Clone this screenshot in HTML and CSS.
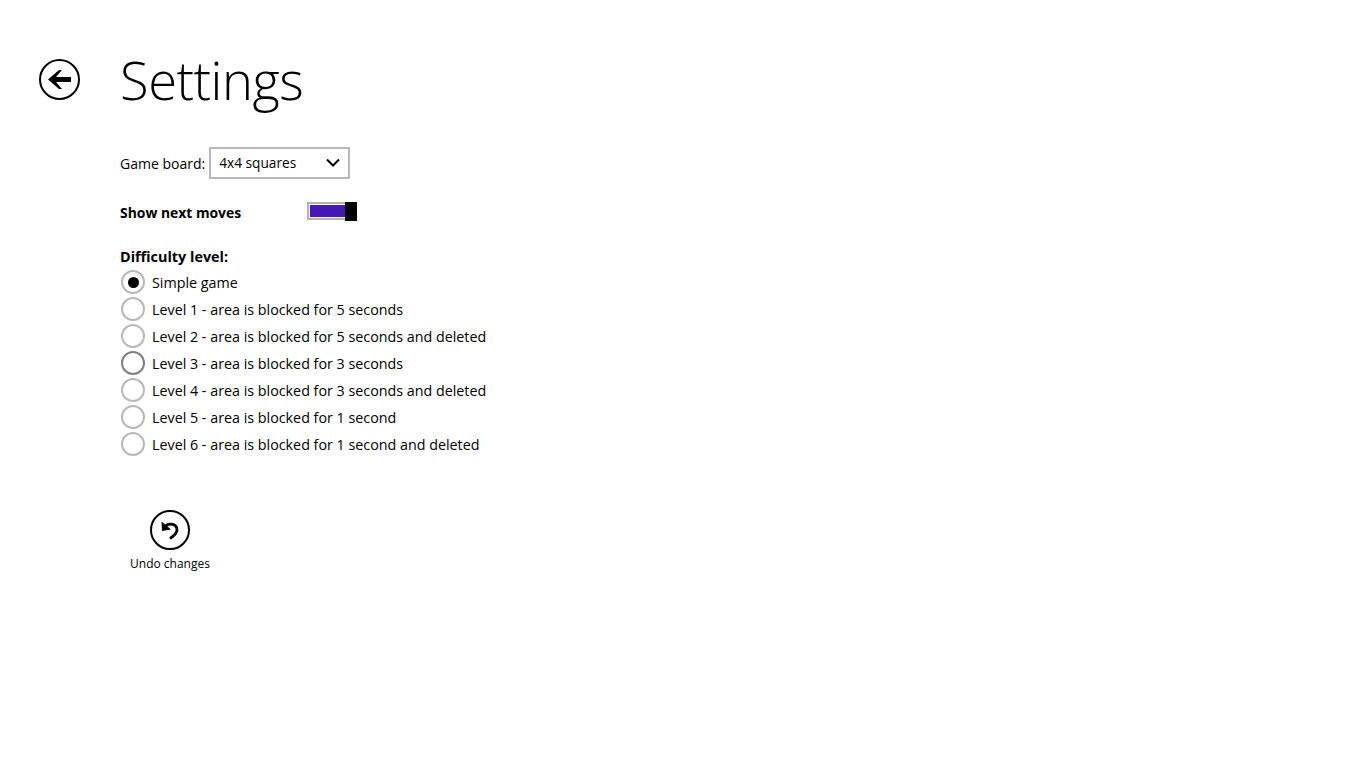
FILE: index.html
```html
<!DOCTYPE html>
<html lang="en">
<head>
    <meta charset="UTF-8">
    <title>Settings</title>
    <link rel="stylesheet" href="styles.css">
</head>
<body>
    <div class="page-header">
        <button type="button" class="back-btn" aria-label="Back">
            <svg width="42" height="42" viewBox="0 0 42 42">
                <circle cx="20.5" cy="20.5" r="19.5" fill="none" stroke="#000" stroke-width="2"/>
                <path d="M9 20.5 L20 11 L23 11 L17 18 L32 18 L32 23 L17 23 L23 30 L20 30 Z" fill="#000"/>
            </svg>
        </button>
        <h1>Settings</h1>
    </div>

    <div class="content">
        <div class="board-row">
            <label>Game board:</label>
            <div class="select-box">
                <span>4x4 squares</span>
                <svg width="14" height="9" viewBox="0 0 14 9">
                    <path d="M1 1.5 L7 7.5 L13 1.5" fill="none" stroke="#000" stroke-width="2"/>
                </svg>
            </div>
        </div>

        <div class="toggle-row">
            <label class="bold-label">Show next moves</label>
            <div class="toggle">
                <div class="toggle-fill"></div>
                <div class="toggle-thumb"></div>
            </div>
        </div>

        <div class="bold-label level-title">Difficulty level:</div>
        <div class="radio-list">
            <div class="radio-row"><span class="radio checked"></span>Simple game</div>
            <div class="radio-row"><span class="radio"></span>Level 1 - area is blocked for 5 seconds</div>
            <div class="radio-row"><span class="radio"></span>Level 2 - area is blocked for 5 seconds and deleted</div>
            <div class="radio-row"><span class="radio hover"></span>Level 3 - area is blocked for 3 seconds</div>
            <div class="radio-row"><span class="radio"></span>Level 4 - area is blocked for 3 seconds and deleted</div>
            <div class="radio-row"><span class="radio"></span>Level 5 - area is blocked for 1 second</div>
            <div class="radio-row"><span class="radio"></span>Level 6 - area is blocked for 1 second and deleted</div>
        </div>

        <div class="undo-btn">
            <svg width="40" height="40" viewBox="0 0 40 40">
                <circle cx="20" cy="20" r="19" fill="none" stroke="#000" stroke-width="2"/>
                <path d="M15.5 16 C19.5 12.5 27 14 27 20 C27 23.5 24.5 25.5 20 28.5" fill="none" stroke="#000" stroke-width="2.8"/>
                <path d="M11.5 11.5 L12 21 L21 19.5 Z" fill="#000"/>
            </svg>
            <span>Undo changes</span>
        </div>
    </div>
</body>
</html>
```

FILE: styles.css
```css
* {
    box-sizing: border-box;
}

body {
    margin: 0;
    background: white;
    color: #000;
    font-family: "Open Sans", "Noto Sans", sans-serif;
    font-size: 14px;
}

.page-header {
    display: flex;
    align-items: center;
    height: 147px;
    padding: 13px 0 0 39px;
}

.back-btn {
    width: 42px;
    height: 42px;
    padding: 0;
    border: none;
    background: none;
    margin-right: 39px;
}

.back-btn svg,
.undo-btn svg {
    display: block;
}

h1 {
    margin: 0;
    font-size: 52.5px;
    font-weight: 300;
    line-height: 66px;
    letter-spacing: -0.5px;
}

.content {
    padding-left: 120px;
}

.board-row {
    display: flex;
    align-items: center;
    gap: 4px;
    height: 32px;
}

.select-box {
    display: flex;
    align-items: center;
    justify-content: space-between;
    width: 141px;
    height: 32px;
    padding: 0 8px 2px 8px;
    border: 2px solid #b9b9b9;
    font-size: 13.7px;
}

.toggle-row {
    display: flex;
    align-items: center;
    height: 22px;
    margin-top: 21px;
}

.bold-label {
    font-weight: 700;
    font-size: 13.9px;
}

.toggle-row label {
    width: 187px;
    padding-top: 2px;
}

.toggle {
    width: 50px;
    height: 18px;
    border: 2px solid #b3b3b3;
    border-right: none;
    position: relative;
}

.toggle-fill {
    width: 35px;
    height: 12px;
    margin: 1px 0 0 1px;
    background: #4617b4;
}

.toggle-thumb {
    position: absolute;
    top: -2px;
    right: 0;
    width: 12px;
    height: 19px;
    background: #000;
}

.level-title {
    margin-top: 25px;
    line-height: 20px;
    font-size: 14.4px;
}

.radio-list {
    display: flex;
    flex-direction: column;
    margin-top: 2px;
    font-size: 14.3px;
}

.radio-row {
    display: flex;
    align-items: center;
    height: 27px;
}

.radio {
    display: flex;
    align-items: center;
    justify-content: center;
    width: 24px;
    height: 24px;
    margin: 0 7px 1px 1px;
    border: 2px solid #b9b9b9;
    border-radius: 50%;
}

.radio.hover {
    border-color: #808080;
}

.radio.checked::after {
    content: "";
    width: 11px;
    height: 11px;
    border-radius: 50%;
    background: #000;
}

.undo-btn {
    display: flex;
    flex-direction: column;
    align-items: center;
    width: 100px;
    margin: 52px 0 0 0;
    font-size: 12px;
}

.undo-btn span {
    margin-top: 5px;
}
```
